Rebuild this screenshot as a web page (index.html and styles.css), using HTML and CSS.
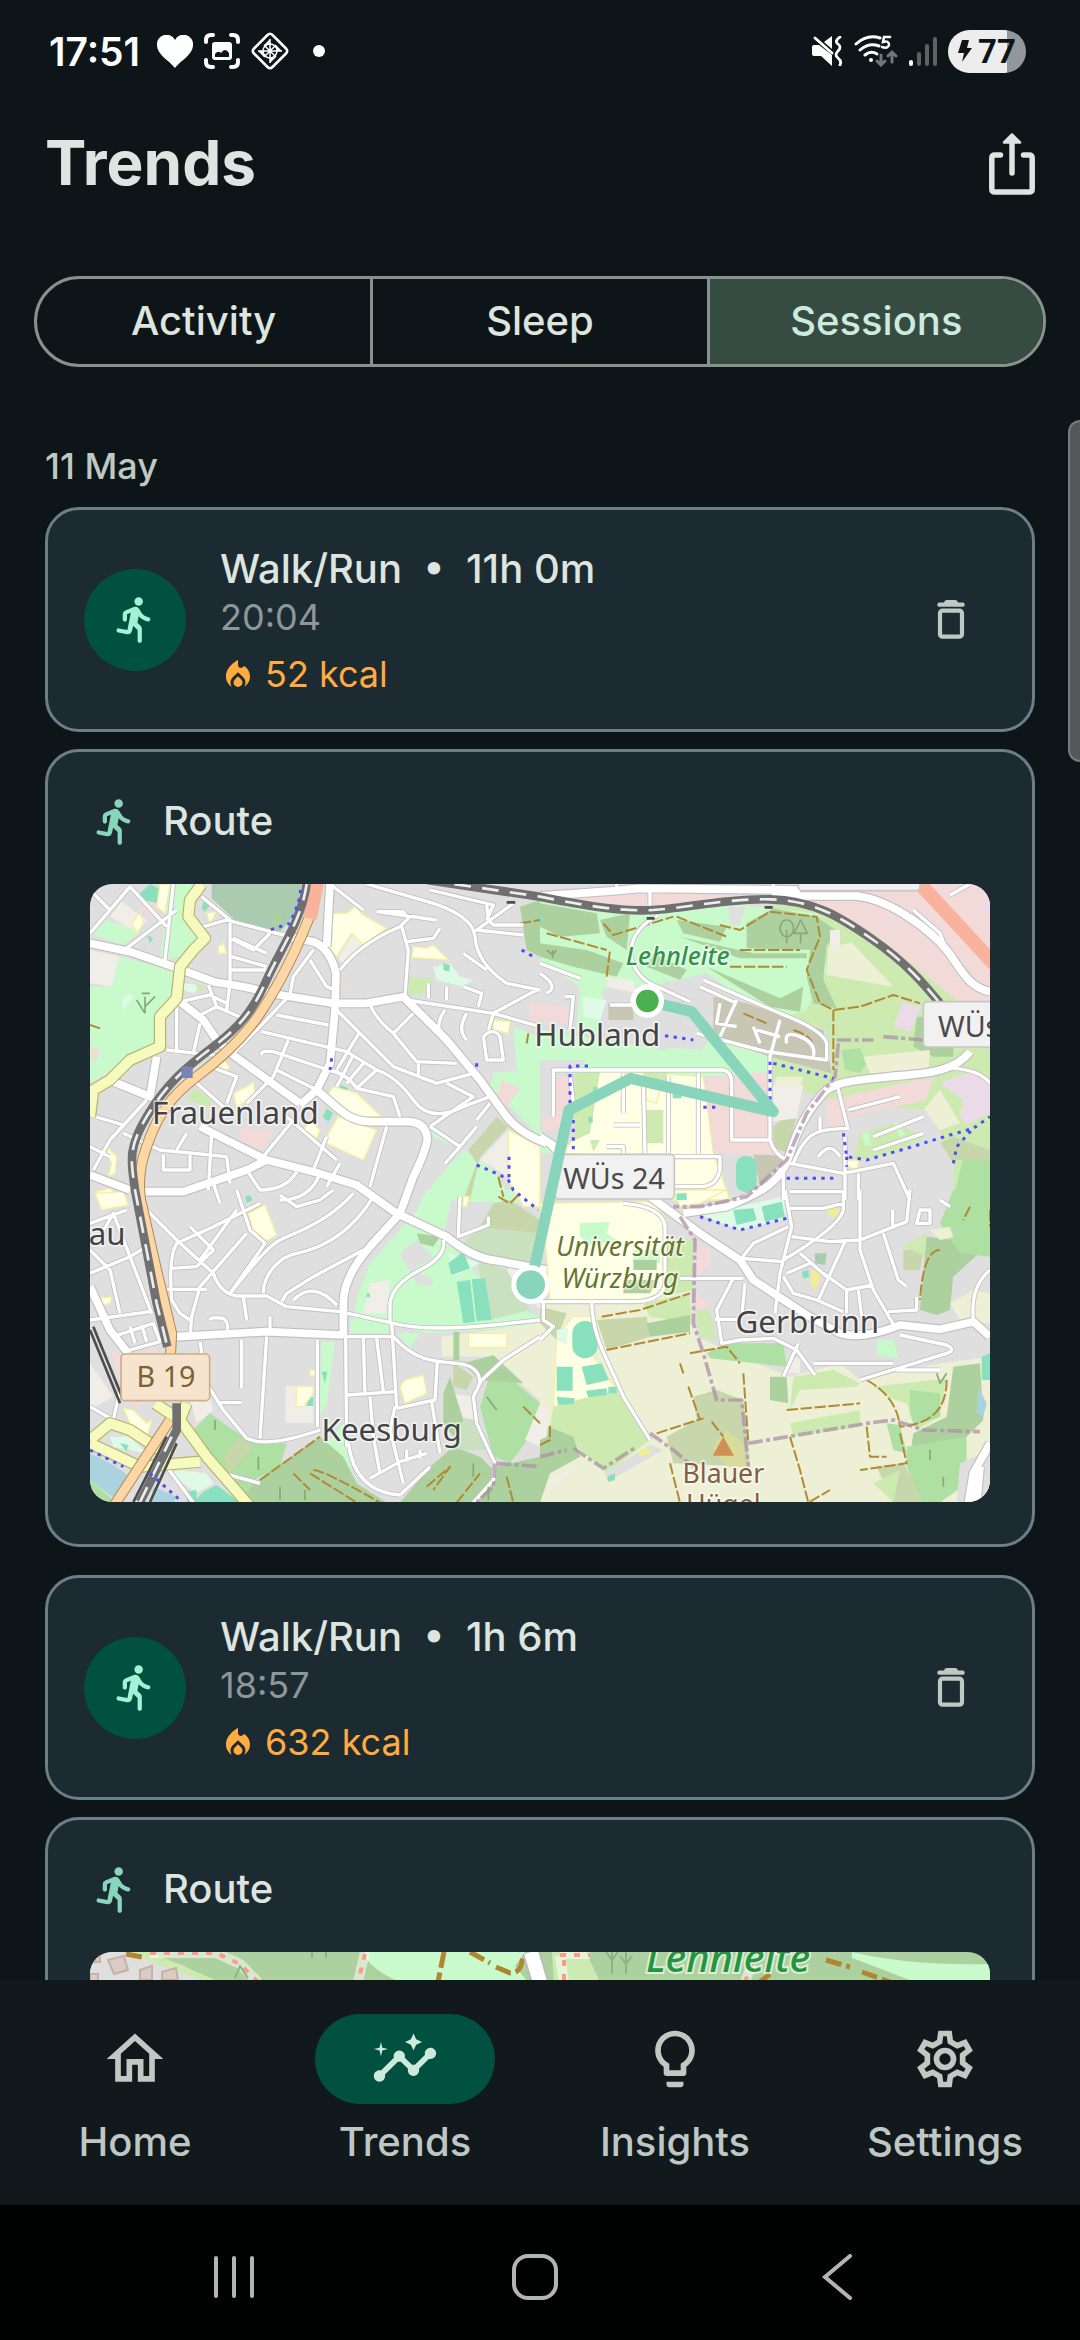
FILE: index.html
```html
<!DOCTYPE html>
<html lang="en">
<head>
<meta charset="utf-8">
<meta name="viewport" content="width=device-width, initial-scale=1">
<title>Trends</title>
<link rel="stylesheet" href="styles.css">
</head>
<body>
<svg class="defs" aria-hidden="true">
  <symbol id="i-run" viewBox="0 0 24 24"><path d="M13.49 5.48c1.1 0 2-.9 2-2s-.9-2-2-2-2 .9-2 2 .9 2 2 2zM9.89 19.38l1-4.4 2.1 2v5c0 .55.45 1 1 1s1-.45 1-1v-5.64c0-.55-.22-1.07-.62-1.45l-1.48-1.41.6-3c1.07 1.24 2.62 2.13 4.36 2.41.6.09 1.14-.39 1.14-1 0-.49-.36-.9-.85-.98-1.52-.25-2.78-1.15-3.45-2.33l-1-1.6c-.4-.6-1-1-1.7-1-.3 0-.5.1-.8.1l-3.98 1.7c-.74.31-1.22 1.04-1.22 1.84v2.36c0 .55.45 1 1 1s1-.45 1-1V9.58l1.8-.7-1.6 8.1-3.92-.8c-.54-.11-1.07.24-1.18.78-.11.54.24 1.07.78 1.18l4.11.82c1.06.21 2.1-.46 2.34-1.52z"/></symbol>
  <symbol id="i-flame" viewBox="0 0 24 24"><path d="M12 12.9l-2.13 2.09c-.56.56-.87 1.29-.87 2.07C9 18.68 10.35 20 12 20s3-1.32 3-2.94c0-.78-.31-1.52-.87-2.07L12 12.9zM16 6l-.44.55C14.38 8.02 12 7.19 12 5.3V2S4 6 4 13c0 2.92 1.56 5.47 3.89 6.86-.56-.79-.89-1.76-.89-2.8 0-1.32.52-2.56 1.47-3.5L12 10.1l3.53 3.47c.95.93 1.47 2.17 1.47 3.5 0 1.02-.31 1.96-.85 2.75 1.89-1.15 3.29-3.06 3.71-5.3.66-3.55-1.07-6.9-3.86-8.52z"/></symbol>
  <symbol id="i-trash" viewBox="0 0 30 39"><path d="M3 2.500H8Q8.500 0 10.500 0H19.500Q21.500 0 22 2.500H27A2.200 2.200 0 0 1 27 6.800H3A2.200 2.200 0 0 1 3 2.500Z"/><rect x="4" y="10.700" width="22" height="26" rx="2.500" fill="none" stroke="currentColor" stroke-width="4.200"/></symbol>
</svg>

<div class="screen">
  <div class="status">
    <div class="status-left">
      <span class="clock">17:51</span>
      <svg width="36" height="33" viewBox="0 0 36 33" fill="#fff"><path d="M18 33C13 26 0 20 0 10A9.500 9.500 0 0 1 18 5A9.500 9.500 0 0 1 36 10C36 20 23 26 18 33Z"/></svg>
      <svg width="36" height="36" viewBox="0 0 36 36" fill="none" stroke="#fff" stroke-width="4" stroke-linecap="round"><path d="M2 9V7Q2 2 7 2H9M27 2H29Q34 2 34 7V9M34 27V29Q34 34 29 34H27M9 34H7Q2 34 2 29V27"/><rect x="8" y="9" width="20" height="18" rx="3" fill="#fff" stroke="none"/><path d="M11 24V21Q14 17 17 20Q21 14 25 20V24Z" fill="#0e1518" stroke="none"/></svg>
      <svg width="38" height="38" viewBox="0 0 38 38" fill="none" stroke="#fff" stroke-width="2.500" stroke-linejoin="round"><path d="M16.500 3Q19 0.500 21.500 3L35 16.500Q37.500 19 35 21.500L21.500 35Q19 37.500 16.500 35L3 21.500Q0.500 19 3 16.500Z"/><g stroke-width="1.500"><path d="M19 7V31M7 19H31M13 13L25 25M25 13L13 25"/><circle cx="19" cy="19" r="7"/></g><path d="M19 7L13 13H19ZM31 19L25 13V19ZM19 31L25 25H19ZM7 19L13 25V19Z" fill="#fff" stroke="none"/></svg>
      <span class="dot"></span>
    </div>
    <div class="status-right">
      <svg width="31" height="30" viewBox="0 0 31 30" fill="#fff"><path d="M2 9H7L20 19V30L9 20H2Q0 20 0 18V11Q0 9 2 9Z"/><path d="M12 6L20 0V13Z"/><path d="M3 2L20 17M28 1Q22 5 26 8T26 15T26 22T28 29" fill="none" stroke="#fff" stroke-width="2.800" stroke-linecap="round"/></svg>
      <svg width="44" height="32" viewBox="0 0 44 32" fill="none" stroke="#fff" stroke-width="3" stroke-linecap="round"><path d="M2 9Q13 -1 26 3M6 15Q15 7 25 11M11 20Q17 15 23 19"/><circle cx="17" cy="25" r="2" fill="#fff" stroke="none"/><path d="M36 2H30L29 7Q35 5 35 10Q34 14 28 12" stroke-width="2.500"/><path d="M27 20V29M23 26L27 30L31 26M38 27V18M34 21L38 17L42 21" stroke="#707679"/></svg>
      <svg width="28" height="30" viewBox="0 0 28 30" stroke-width="4" stroke-linecap="round" fill="none"><path d="M2 26V28" stroke="#fff"/><path d="M10 18V28M18 10V28M26 3V28" stroke="#5d6365"/></svg>
      <div class="battery">
        <svg width="14" height="22" viewBox="0 0 14 22" fill="#0e1518"><path d="M4 0H11L9 8H14L4 22L6 13H0Z"/></svg>
        <span>77</span>
      </div>
    </div>
  </div>

  <header class="top">
    <h1>Trends</h1>
    <button class="share" aria-label="Share">
      <svg width="46" height="62" viewBox="0 0 46 62" fill="none" stroke="currentColor" stroke-width="5.500" stroke-linecap="round" stroke-linejoin="round"><path d="M11.500 22H6Q2.800 22 2.800 25V56Q2.800 59 6 59H40Q43.200 59 43.200 56V25Q43.200 22 40 22H34.500M23 10V40"/><path d="M23 1.500L31 9.500H15Z" fill="currentColor" stroke-width="2.500"/></svg>
    </button>
  </header>

  <div class="segments" role="group" aria-label="View">
    <button>Activity</button>
    <button>Sleep</button>
    <button class="on" aria-pressed="true">Sessions</button>
  </div>

  <main class="list">
    <h2 class="date">11 May</h2>

    <article class="card session">
      <span class="avatar"><svg class="run"><use href="#i-run"/></svg></span>
      <div class="info">
        <h3>Walk/Run&nbsp; •&nbsp; 11h 0m</h3>
        <p class="time">20:04</p>
        <p class="kcal"><svg class="flame"><use href="#i-flame"/></svg>52 kcal</p>
      </div>
      <button class="delete" aria-label="Delete session"><svg class="trash"><use href="#i-trash"/></svg></button>
    </article>

    <section class="card route">
      <h3><svg class="run"><use href="#i-run"/></svg>Route</h3>
      <svg class="map" viewBox="30 42 2700 1854" role="img" aria-label="Route map">
        <defs>
          <g id="majors">
            <path d="M30 220L150 245 280 290 400 335 490 350 600 375 760 400 860 400 970 380 1100 510 1200 630 1280 740Q1320 790 1400 820"/>
            <path d="M610 198L700 215Q750 235 768 310L765 420 750 580 710 660 660 705"/>
            <path d="M750 42L740 230M300 395L370 450 410 510 460 555 660 700M710 660L780 720Q820 755 870 755H980Q1040 755 1042 810 1035 850 1000 920L960 1030 870 1130Q790 1220 790 1300V1400"/>
            <path d="M360 770L560 870 700 905 830 945 950 1030 1100 1100Q1180 1165 1250 1172L1400 1200"/>
            <path d="M190 965H310L500 900 560 870M30 915L150 960M100 635L210 680 230 560M290 1400L560 1385 790 1395M30 1250L90 1380 145 1450"/>
            <g transform="translate(1380)"><path d="M0 78Q200 65 300 55L780 60M700 78H950C1060 90 1180 190 1220 240S1280 350 1350 365"/><path d="M1290 545C1240 610 1150 610 1050 620S880 635 850 670 780 750 750 850 650 970 560 1010L430 1030M0 800L60 840"/></g>
            <g transform="translate(1380 960)"><path d="M330 20L480 130 600 210 640 270 800 375 900 430Q970 450 1080 405L1200 418 1300 395 1350 440M1350 760L1300 850 1285 940M1320 830L1310 940"/></g>
          </g>
          <g id="minors">
            <path d="M30 190L150 50M30 60L90 120M150 50L260 170M280 42L255 270M140 235L290 120M365 80L450 150V340L440 420M370 170L440 150 740 230M450 205L520 240 570 190M455 260L560 290M460 205L560 250M455 300H560M850 120L750 42M890 125H970L985 145 960 170Q840 220 780 300M965 170L985 240 975 380M890 125L1070 150M980 215L1060 205 1080 175M860 42L1060 100Q1180 140 1185 200 1190 280 1280 340L1380 360M1050 60L1240 105 1220 150M1300 100L1190 180 1330 195M1150 250L1220 300M1240 430L1370 360M1220 105L1225 150 1240 165H1330M700 240L640 320 630 375M690 270L740 350 765 360M300 395L390 375 440 400M385 345L410 410 350 440M290 410V550M360 460L340 550M260 540L440 560M410 410L500 450"/>
            <path d="M620 385L540 470 460 550M590 435L745 465M545 485L800 545M625 510L580 620 500 700M545 555Q540 540 580 545L745 600M590 600L700 655M770 420L940 590 1070 640 1180 610M870 400Q880 440 940 490L1010 575 1130 580M940 490L1000 430M840 485L770 600M1015 575V620M745 600Q800 610 830 655L940 680 960 740M830 655L890 600Q950 620 1000 690T1150 710L1230 680M800 545L890 600M820 555L770 650M850 580L800 640M1050 770L1180 680 1100 640M1190 750L1230 700M1050 770L1140 830 1190 770M1140 830L1095 880M980 390L1240 430 1380 470M1240 430L1225 480M1045 340V385M1100 350V390M1150 350L1205 370 1195 410M1095 420Q1060 470 1090 500M1160 430Q1130 480 1160 510M1210 500L1220 570H1270L1260 500Q1240 470 1210 500"/>
            <path d="M340 630L430 710M390 590L470 620 440 700M30 735L130 765 100 800M200 690L90 810 40 900M130 790L240 840 440 860M320 790L290 840M395 790L385 960M250 855V900H330V855M440 860L450 940M640 750L550 860M740 800L700 900M620 740L770 870M920 770L870 950M780 880L740 950M650 905Q620 960 540 960L500 900M720 910Q690 990 600 990M400 940L420 1000M30 830L90 860"/>
            <g transform="translate(0 960)"><path d="M200 60L290 150 400 250Q420 310 470 318H560L620 350 780 365 940 400Q1040 425 1240 405L1380 390M470 0L510 120 555 160 450 310M820 10C740 100 640 130 600 150S500 250 450 310M880 20C800 150 700 180 650 190S550 250 550 310M850 180L700 260 620 310 605 335M640 330Q700 270 770 345M540 40L400 110 290 160Q265 200 275 330L300 370 330 390M470 60L360 210M500 130L360 290 335 380 330 440M275 235L350 230 400 180 330 110M250 298H380M490 320L500 390M600 15L650 50 720 30 760 0"/><path d="M360 455L380 580 430 660 500 745Q560 775 720 720M485 450V595M560 440L540 745M410 638H485M712 450V710M797 440L800 770M890 445L910 605M850 445L855 615M935 400L950 650M800 615L950 605M870 620L880 740 900 850M805 760C820 870 880 910 960 915M945 650L930 720 970 880M950 655L1065 630 1072 515M790 440H940C1000 510 1060 515 1130 520S1200 570 1200 580L1180 620 1190 700 1245 820 1240 870 1180 938M1200 575L1270 510 1380 440M870 865L960 815 1040 790M1055 635L1080 790M980 780V815M1020 780V805M960 915L1050 830M1090 150Q1100 200 1020 240T930 340V400M1140 20L1135 140 1225 105V80M60 140L100 70 150 200 215 370M30 180L90 240 120 370M30 250L150 200 200 170M30 390L210 365M100 440L220 400 240 455 150 480M150 410L165 460M185 405L200 455M30 100L140 60M430 850L540 880M260 830L340 938M390 390Q390 380 430 385Q450 400 440 430M570 430V380M30 650L100 690 120 600"/></g>
            <g transform="translate(1380)"><path d="M355 135C250 190 250 290 330 340L450 395M0 280L120 325M0 310Q60 350 20 370M75 380H100L90 480M210 405H430M40 740V600H550Q575 605 575 640V810H690V555M90 610L100 700M250 610V730M310 620L315 850M385 620V850M475 610V850M220 765H300M0 800L60 860H540V900Q530 950 480 950H400M200 830H250V860M690 810Q700 850 740 870M470 490L680 545 860 570V520Q850 480 720 430L490 330M590 390L540 500M720 450L690 560M640 470L660 520M540 400L530 460 590 470M650 480L720 500M740 520Q730 480 780 500T820 560M890 640L925 780M925 720L1080 680M750 880L910 910 1060 880 1110 990M760 880C800 780 830 780 925 775M730 900V990M915 800V990M955 910V990M750 965H910M840 740V780M1350 640Q1320 600 1240 595M1120 120L1200 190 1220 240M1230 75L1290 42M480 350L590 400M330 60V110M230 42V70M700 42V80M835 860Q870 810 900 860M1000 800L1150 740M1000 840L1150 790"/></g>
            <g transform="translate(1380 960)"><path d="M0 335H290Q370 330 375 280V110Q370 50 250 40M155 340C160 450 200 500 250 620L330 750M10 335V390L40 410 0 450M420 265H610M580 265L530 360 545 460 600 450 700 445 770 480 825 555M730 560L775 460M615 280L605 380M525 388H600M745 110L640 160 605 205 730 215M735 0L755 110 720 250 705 370M740 55H850L910 40M755 140L870 155 960 150 1100 95 1110 0M910 0V60Q900 110 730 210M960 0V180L1000 300 1070 420M1030 130L1075 270 1100 290M1058 60V110M915 155L835 330M730 260L760 310 830 330 910 365M850 250L920 300 1000 285M780 190L860 260M920 300V370M955 300L965 380M740 250L810 220M1045 365L1130 360V320M1080 435L1220 465Q1250 480 1220 490L960 570M820 520H1060M1070 540H1200M1350 240Q1290 290 1300 390M1140 60H1170V100H1130ZM1200 30L1230 50"/></g>
          </g>
        </defs>
        <rect class="residential" width="2760" height="1950"/>

        <g>
          <path class="plain" d="M90 140L125 95 200 150 170 190ZM30 240L120 260 95 350 30 340ZM775 260L820 190 850 220 790 290ZM1200 870L1285 780V920Z"/>
          <path class="park" d="M30 350H95L120 260 280 300 270 390 235 430 230 530 130 580 30 640ZM270 42H350L310 130 380 200 300 260 240 270ZM80 150L30 190 130 225 180 185ZM1300 470L1380 500V800L1230 650 1240 610 1310 600ZM1040 990L1060 940 1150 840 1200 870 1250 910 1300 1000ZM1050 780L1130 830 1060 800ZM540 440L560 430 520 480 490 500Z"/>
          <path class="light" d="M1060 290L1110 280 1140 320 1180 330 1150 350 1070 330ZM310 340L360 345 340 370 310 360ZM125 390L150 370 160 380 130 420Z"/>
          <path class="grave" d="M395 42H665L650 130 600 185 470 155 395 85Z"/>
          <path class="forest" d="M1320 110L1380 90V260L1340 240ZM575 130L600 125 610 165 575 170Z"/>
          <path class="grass" d="M985 320L1060 325 1050 370 985 375ZM340 655L400 690 385 710 320 690ZM345 340L375 350 360 370Z"/>
          <path class="heath" d="M1250 740L1285 770 1200 860 1170 990H1150L1190 880 1165 840Z"/>
          <path class="pink" d="M180 100L215 90 235 120 195 135ZM480 775L585 780 545 840 475 810ZM1350 400H1380V455H1350ZM1265 630L1320 655 1280 710 1250 690ZM785 345L805 350 795 370ZM30 520L60 550 40 580Z"/>
          <path class="sport" d="M175 75L210 42 245 60 235 100 190 90ZM200 195L220 205 210 220ZM370 95L390 105 375 125 365 115ZM1090 280L1110 285 1108 305 1090 300ZM740 715L760 730 745 755 728 740ZM785 645L805 655 795 670 775 660ZM835 710L855 715 840 735ZM500 660L520 665 510 685Z"/>
          <path class="school" d="M750 130H800L825 110 850 135 920 175 850 225 815 190 770 260 745 230ZM1000 230L1040 235 1060 225 1105 270 995 262ZM745 790L775 740 890 780 850 870 740 820ZM760 650L830 670 905 740 830 740 740 680ZM240 42H270L255 130 230 110ZM155 160L180 130 190 160 170 190ZM415 230L430 220 440 250 415 250ZM85 835L110 860 105 910 85 920 95 880 80 850ZM460 670L500 650 520 635 525 680 470 710ZM50 965L90 955 120 990 60 1000ZM1240 450L1290 455 1285 490 1240 480ZM690 750L720 780 710 805 670 780ZM430 570L450 590 440 600 410 590ZM380 130L410 125 390 160ZM1285 780L1380 830V1010H1330L1285 930Z"/>
        </g>
        <g transform="translate(0 960)">
          <path class="park" d="M1040 0H1120L1090 140 1260 330 1380 380V410L1040 430 940 400 820 390 830 320 870 220 960 120 1010 60ZM725 455H765L740 650 718 670ZM740 760L790 700 830 938 740 880ZM950 430H1020L990 475ZM810 390H930L925 430H810ZM1240 0H1300L1320 40 1270 30Z"/>
          <path class="residential" d="M960 190L1010 150 1060 200 1000 240 1060 270 1050 290 1010 280Z"/>
          <path class="plain" d="M870 280L930 270 920 370 850 370ZM617 587H700V698H617ZM1290 230L1350 240 1380 300V360L1330 300 1270 260ZM330 630L390 620 400 660 350 700ZM30 520L100 620 30 660ZM1110 610L1180 620 1190 740 1140 700Z"/>
          <path class="allot" d="M1150 160L1200 110 1380 110V220L1200 210ZM1190 210L1280 240 1350 360 1230 390ZM1120 680L1190 690 1220 780 1120 780Z"/>
          <path class="heath" d="M1200 110L1240 40 1290 30 1380 90V130ZM1120 520L1180 560 1160 600 1120 590Z"/>
          <path class="farm" d="M1085 440L1380 400V630L1240 510 1200 500 1085 500Z"/>
          <path class="wood" d="M330 730L390 670 430 700 520 760 620 760 600 830 520 870 500 938 420 870ZM1240 520L1380 640V700L1290 820 1240 800 1200 650ZM30 870L110 938H30Z"/>
          <path class="forest" d="M520 880L720 740 790 800 830 880 920 938H480ZM1090 610L1110 560 1150 690 1120 740 1090 700ZM1050 830L1120 770 1200 800 1250 850 1240 938H960ZM1150 520L1240 495 1330 580 1200 570ZM1250 830L1380 800V938H1240ZM1120 425H1138V510H1120ZM1010 130L1080 140 1060 170 1020 160Z"/>
          <path class="plain" d="M1380 640L1335 750 1380 770Z"/>
          <path class="heath" d="M430 800L480 740 520 770 450 850Z"/>
          <path class="pink" d="M85 465L120 500V570ZM270 350L290 400V430L265 380ZM200 475H230V490H200ZM140 625H200L170 660Z"/>
          <path class="water" d="M30 790L100 825 150 860 110 930 30 870ZM220 890L290 920 280 938H210Z"/>
          <path class="light" d="M300 840L380 850 400 880 350 910 270 850ZM90 740L150 740 200 790 100 770ZM1105 190L1200 220 1120 260Z"/>
          <path class="sport" d="M1105 220L1150 185 1170 235 1115 255ZM1130 275L1170 270 1185 395 1150 400ZM1175 268L1215 265 1235 390 1190 393ZM370 905L410 885 480 938H340ZM680 620H700V648H680ZM1010 560H1028V580H1010ZM495 20L510 15 518 30 500 40ZM725 545H742L735 580ZM120 760L145 765 140 785ZM320 905L350 900 350 938H320ZM860 310H870V322H860Z"/>
          <path class="school" d="M1165 430H1280V472H1165ZM505 70L555 45 590 135 560 152 520 120ZM45 10L130 5 145 45 65 60ZM650 590H700V610L670 650H648ZM690 540H705V558H690ZM975 570L1030 555 1040 610 975 640 960 590ZM65 322H95L90 340 65 345ZM130 655L160 660 200 700 215 690 200 750 150 700ZM1150 20H1168L1160 50H1148Z"/>
        </g>
        <g transform="translate(1380)">
          <path class="pink" d="M230 42H1350V420L1240 400 1000 200 800 100 400 110 0 90ZM10 620H100V780H10Z"/>
          <path class="grass" d="M700 60L1000 190 1350 470V990H1240L1200 780 1160 720 880 700 690 620 700 560 880 600 860 480 700 420Z"/>
          <path class="park" d="M0 90L250 130 400 125 600 105 830 130 860 300 800 420 740 440 600 380 500 310 370 340 190 360 180 490 0 480ZM0 480L370 540 480 500 690 560 680 620 0 610ZM0 780L60 850H0Z"/>
          <path class="residential" d="M0 285L60 310 120 350 110 480 0 480Z"/>
          <path class="pink" d="M0 400L85 410V465L0 445Z"/>
          <path class="forest" d="M0 100L170 130 180 190 60 200 0 170ZM0 220L140 240 250 280 230 320 100 290 0 260ZM180 150L270 130 260 240 200 200ZM410 150L560 170 540 215 430 190ZM620 160L700 115 830 140 820 240 620 235ZM340 250L440 300 420 330 320 290ZM500 290L720 385 790 350 780 425 690 410ZM830 140L900 190 860 225 850 330 890 415 820 400 800 320 810 240ZM420 200L640 250H800V265H600ZM1130 440H1240V560L1180 560 1120 530Z"/>
          <path class="wood" d="M905 540L960 535 980 580 960 608 915 600ZM1270 860L1350 850V990H1240Z"/>
          <path class="farm" d="M865 230L935 218 1060 350 860 315ZM970 560L1170 540 1165 600 990 610ZM710 620L790 620 780 650 700 660ZM1150 720L1200 660 1260 760 1200 780Z"/>
          <path class="heath" d="M700 770L780 700 740 850 700 830ZM1110 860L1240 800 1350 840V870H1200Z"/>
          <path class="residential" d="M195 350L470 390 515 410 520 500 480 540 360 530 340 490H190ZM370 325L460 370 510 400 450 420ZM0 570L140 570 100 610H40V740H0ZM565 110H615L600 165H570ZM740 860L800 790 900 775 1160 720 1190 800 1240 880V990H700Z"/>
          <path class="plain" d="M690 650L790 645 770 745 690 755ZM200 320L280 330 290 370 200 350ZM870 180L900 180 900 230H870Z"/>
          <path class="brown" d="M520 380L620 400 850 480 875 610 690 560 520 500ZM205 400H280V450H205ZM640 850L740 860 660 950Z"/>
          <path class="school" d="M180 600L490 620 520 850 570 990H400V860L60 850 100 810Z"/>
          <path class="grass" d="M105 610L180 605 150 790 105 810ZM315 720H370V820H315ZM150 810H180L160 845ZM310 600H380V640H310ZM960 790L1060 760 1160 800 1060 850 940 870Z"/>
          <path class="pink" d="M490 620L680 605 690 810 700 855 525 850ZM860 690L1180 620 1160 690 930 740 910 780 860 760Z"/>
          <path class="lilac" d="M1060 470L1090 395 1145 410 1110 485ZM1200 640L1300 600 1350 640V730L1280 765 1260 740 1270 690ZM1320 110L1350 90V130Z"/>
          <path class="park" d="M965 790L985 785 995 825 975 830ZM1060 760L1075 755 1095 795 1080 800Z"/>
          <path class="light" d="M130 380L200 390 180 450 130 440Z"/>
          <rect class="sport" x="588" y="858" width="62" height="108" rx="28"/>
          <path class="sport" d="M0 135L15 140 10 155H0ZM410 968H440V990H410ZM398 660H425V685H398ZM160 650H172V675H160ZM145 740H158V758H145Z"/>
          <path class="school" d="M922 870L958 872 950 898 922 890ZM318 650L360 655 350 700 320 690Z"/>
        </g>
        <g transform="translate(1380 960)">
          <path class="farm" d="M0 340L450 300 470 440 600 500 750 560 900 520 960 570 1200 520 1350 500V938H0Z"/>
          <path class="school" d="M0 40L340 35 380 90 375 310 340 330H30L20 200ZM50 440L100 380 170 380 160 500 230 600 40 650ZM400 0H560L480 40 420 50Z"/>
          <path class="heath" d="M170 390L320 380 330 440 200 480ZM0 350L80 370 50 450 0 400ZM380 740L470 690 460 620 530 600 610 630 630 830 400 820ZM1010 830L1090 820 1160 938H1060ZM1090 180H1150L1140 240H1090Z"/>
          <path class="park" d="M120 100L210 95 200 130 230 150 160 170 120 140ZM280 180H360V220L280 215ZM1010 450L1060 450 1075 505 1010 495Z"/>
          <path class="light" d="M480 75L730 20 740 85 600 120ZM50 420L85 415 80 465 50 450Z"/>
          <path class="grass" d="M370 150L460 150V300L370 320ZM310 340L450 310 455 400 330 380ZM470 360L510 360 530 450 480 440ZM40 650L230 600 330 750 200 850 110 770 30 710ZM760 560L880 540 960 580 950 590 780 600 750 660ZM750 700L960 660V710L760 740ZM1000 590L1220 565 1200 680 1130 720 1080 640ZM1090 170L1160 130V200ZM1000 880L1080 840 1060 938Z"/>
          <path class="forest" d="M320 400L450 375V425L330 440ZM0 700L100 740 120 800 30 850 0 938ZM690 560L740 560 745 640 690 630ZM1160 140L1250 150 1230 360 1190 375 1140 360ZM1240 530L1320 520 1330 690 1250 770 1110 800 1120 730 1220 680ZM1240 150L1350 100V160L1240 260ZM280 210H350V240H280ZM250 270H350L330 310H250Z"/>
          <path class="wood" d="M500 490L560 460 730 460 740 530 510 505ZM1240 0H1350V200L1260 190 1200 100ZM1110 600L1200 610V680L1110 710ZM1100 770L1280 740V880L1200 938H1150L1100 830ZM1040 700L1080 705 1100 790 1060 780Z"/>
          <path class="farm" d="M960 600L1100 640 1120 700 980 690ZM1230 340L1300 300 1350 310V400L1260 390ZM1170 120L1230 110 1240 140 1200 150Z"/>
          <path class="plain" d="M0 650L30 660 20 740 0 750ZM40 860L120 820 50 880 20 920ZM750 510L780 500V550H740Z"/>
          <path class="hill" d="M520 770L560 720 610 760 620 830H560Z"/>
          <path class="pink" d="M470 170L510 170V220L470 260ZM465 300L510 350 470 362Z"/>
          <path class="residential" d="M190 850L330 765 370 780 210 870ZM1260 820L1350 780V938H1250Z"/>
          <path class="grave" d="M825 190L860 190 855 225 825 220Z"/>
          <path class="sport" d="M580 60L640 55 650 90 590 105ZM665 50L725 35 735 80 675 95ZM50 530H98V602H50ZM125 530L185 520 207 570 140 585ZM138 602L200 595V615L145 622ZM50 620L105 625 100 642 55 645ZM785 245L805 240 808 262 790 265ZM410 10H440V30H410ZM200 860L225 850V870L205 875ZM1325 500L1350 490V570H1325ZM205 590H230V610H205Z"/>
          <rect class="sport" x="97" y="393" width="76" height="112" rx="38"/>
          <path class="water" d="M1315 590L1340 640 1330 680 1310 670Z"/>
          <path class="gold" d="M815 240H838V270L825 300 812 280ZM855 60L880 50 900 60 880 85ZM290 790L320 770 335 785 310 800Z"/>
        </g>

        <g class="tracks">
          <g transform="translate(1380)"><path d="M190 160L220 195 400 140M200 320L210 240M540 165L600 180 690 125 830 140 840 200 800 300 840 400 880 420 960 410 1060 375 1140 400M880 420V600M570 290H740M600 240H780M20 190L200 240M410 140L560 200M610 430L680 460M760 480Q830 500 820 550"/></g>
          <g transform="translate(1380 960)"><path d="M185 380L300 360 450 310M200 480L450 430M450 490L560 470 600 520M610 550L625 760M350 730L490 685M390 820L420 938M750 740L780 840 805 938 870 900M740 660L960 640M980 570Q1070 620 1080 710M1220 570Q1220 700 1080 710M1080 730L1100 820 960 840M420 520L430 550M445 590L480 690M515 695L550 740M980 710L990 800H1040M1200 180Q1150 180 1140 330M0 765L30 750V700M1290 50L1270 90M1350 60V110"/></g>
          <g transform="translate(0 960)"><path d="M540 870L720 740M690 850L830 938M700 840Q730 840 900 938M640 850L690 900M1040 890L1110 830 1060 900M1130 938L1200 850M1280 860L1300 938M1330 650L1380 700M1255 20L1290 40 1320 10"/></g>
          <path d="M30 465L60 475M1345 490L1340 520M1320 160L1380 150M1255 920L1270 980"/>
        </g>

        <g class="casing minor"><use href="#minors"/></g>
        <g class="casing major"><use href="#majors"/></g>
        <g class="paved minor"><use href="#minors"/></g>
        <g class="paved major"><use href="#majors"/></g>

        <g class="yellow-road">
          <path id="sec" d="M365 42L330 90 325 140 375 205 340 240 300 290 290 385 240 440V530L150 570 90 630 40 660 30 740M30 1710L90 1660 150 1680 270 1760M225 1600L300 1650 320 1600M300 1650L380 1760 510 1910M30 1720L180 1790 360 1775"/>
          <use href="#sec" class="inner"/>
        </g>
        <g class="trunk">
          <path id="tr" d="M700 110C640 270 580 370 540 430S430 560 350 620 230 740 200 830Q170 910 182 990L225 1180 275 1390 270 1480M270 1650L100 1910"/>
          <use href="#tr" class="inner"/>
          <path class="red" d="M712 30L690 145M2500 20L2750 290"/>
        </g>
        <g class="rail">
          <path d="M680 42C665 150 600 240 560 330S480 470 400 530 260 640 200 740 155 880 165 960L190 1090 230 1300 262 1430M290 1600V1680L180 1896M1040 30L1380 80C1530 110 1630 125 1720 120S1940 85 2070 88 2280 140 2380 210 2530 340 2580 400"/>
          <path class="ties" d="M680 42C665 150 600 240 560 330S480 470 400 530 260 640 200 740 155 880 165 960L190 1090 230 1300 262 1430M275 1700L180 1896M1040 30L1380 80C1530 110 1630 125 1720 120S1940 85 2070 88 2280 140 2380 210 2530 340 2580 400"/>
          <path class="siding" d="M30 1380L120 1600M40 1370L130 1590M160 1896L260 1700M210 1896L290 1720M1280 97H1306M1700 145H1724M2054 112H2078"/>
        </g>

        <g class="boundary">
          <path d="M2270 510H2380M2410 500L2530 510M2275 520L2265 620 2180 730 2120 870 2000 980 1860 1010 1780 1010"/>
          <path d="M1800 1040L1845 1110 1840 1360 1870 1450 1910 1590H1985L2005 1790M2005 1720L2360 1660 2440 1650 2530 1680 2700 1685M1710 1690L1780 1740 1840 1790M1380 1760L1460 1740M1480 1735L1570 1795 1670 1730M1250 1780L1380 1790M1245 1780L1240 1850 1190 1896"/>
        </g>
        <g class="dotted">
          <path d="M662 60L655 100 630 160 570 180M755 565L750 600M1190 580V600M1325 240L1360 260M1190 885L1260 915 1285 930 1300 960 1375 1020M1287 860V930M30 1740L130 1790M210 1810L300 1890"/>
          <path d="M1470 700V588H1530M1755 497L1840 510M2070 575V700M2080 580L2260 625M1870 712H1920M2290 790L2300 860 2360 870 2480 835 2610 795 2680 775 2730 740M2620 880L2630 830 2680 775M2120 925H2270M2300 860V890M1480 750V840M1860 1040L1980 1080 2120 1045"/>
        </g>
        <rect x="304" y="590" width="34" height="34" fill="#7884b5"/>
        <path class="trees" d="M2120 150a20 25 0 1 0 1 0M2120 180V220M2162 150L2142 190H2182ZM2162 190V220M170 390L195 430M225 380L195 410M195 380V430M185 370H210M1400 240L1418 255 1430 240M1418 240V265M600 1850V1890M535 1760V1800M405 1650V1680M675 1860V1890M1180 1780V1820M1225 1850V1890M2550 1740V1770M2590 1820V1850M1220 1580L1250 1620M2570 1510L2580 1540 2600 1510"/>
        <path d="M1930 1700L1962 1757H1898Z" fill="#d08f55"/>

        <g class="shields">
          <rect x="2155" y="0" width="365" height="62" rx="12"/>
          <rect x="2530" y="395" width="360" height="136" rx="12"/>
          <rect x="1425" y="853" width="358" height="134" rx="12"/>
          <rect class="federal" x="123" y="1452" width="266" height="140" rx="12"/>
          <text x="1602" y="957" text-anchor="middle">WÜs 24</text>
          <text x="2574" y="500">WÜs 24</text>
          <text class="federal-text" x="258" y="1552" text-anchor="middle">B 19</text>
        </g>
        <g class="places">
          <text x="466" y="763" text-anchor="middle">Frauenland</text>
          <text x="1552" y="528" text-anchor="middle">Hubland</text>
          <text x="2182" y="1390" text-anchor="middle">Gerbrunn</text>
          <text x="935" y="1712" text-anchor="middle">Keesburg</text>
          <text x="137" y="1125" text-anchor="end">Sanderau</text>
          <text class="wood-name" x="1793" y="286" text-anchor="middle">Lehnleite</text>
          <text class="uni" x="1620" y="1159" text-anchor="middle">Universität</text>
          <text class="uni" x="1620" y="1255" text-anchor="middle">Würzburg</text>
          <text class="peak" x="1930" y="1840" text-anchor="middle">Blauer</text>
          <text class="peak" x="1930" y="1933" text-anchor="middle">Hügel</text>
        </g>
        <path class="track" d="M1702 393L1835 425 2080 725 1652 625 1467 720 1352 1244"/>
        <circle cx="1702" cy="393" r="50" fill="#fff"/><circle cx="1702" cy="393" r="34" fill="#4caf50"/>
        <circle cx="1352" cy="1244" r="58" fill="#fff"/><circle cx="1352" cy="1244" r="43" fill="#88d5bb"/>
      </svg>
    </section>

    <article class="card session">
      <span class="avatar"><svg class="run"><use href="#i-run"/></svg></span>
      <div class="info">
        <h3>Walk/Run&nbsp; •&nbsp; 1h 6m</h3>
        <p class="time">18:57</p>
        <p class="kcal"><svg class="flame"><use href="#i-flame"/></svg>632 kcal</p>
      </div>
      <button class="delete" aria-label="Delete session"><svg class="trash"><use href="#i-trash"/></svg></button>
    </article>

    <section class="card route">
      <h3><svg class="run"><use href="#i-run"/></svg>Route</h3>
      <svg class="map" viewBox="0 0 900 618" role="img" aria-label="Route map">
        <rect class="forest" width="900" height="618"/>
        <path class="residential" d="M0 0H35L90 12 125 30H0Z"/>
        <path class="park" d="M275 0H435L425 14 438 30H310Q285 20 275 5ZM762 0Q820 14 900 12V40H850Q800 20 762 6Z"/>
        <path class="grass" d="M462 0H496L510 30H464ZM35 0H60L130 30H115Z"/>
        <path d="M18 8L34 4 38 18 24 22ZM50 18L62 14 62 28H50ZM72 20L86 16 88 28H72ZM0 22H8V30H0ZM2 4H10V10H2Z" fill="#d8ccc4" stroke="#c7b1a3" stroke-width="2"/>
        <g fill="none" stroke-width="4">
          <path d="M60 1H126L150 12 168 30M275 0L268 30M470 2H500M470 4L474 30M655 30L662 12" stroke="#fff" stroke-opacity=".5" stroke-width="10"/>
          <path d="M60 1H126L150 12 168 30M275 2L268 30M470 3H500M474 8V30M655 30L662 12" stroke="#f98" stroke-dasharray="6 8"/>
          <path d="M36 2L52 5M354 0L348 30M380 0L400 11M406 15L420 21Q432 22 433 2M670 30L680 22M736 8L760 15M772 20L800 30" stroke="#b0862f" stroke-width="5" stroke-dasharray="16 5"/>
          <path d="M441 0L450 30" stroke="#bbb" stroke-width="18"/><path d="M441 0L450 30" stroke="#fff" stroke-width="14"/>
        </g>
        <path d="M222 0V6M236 0V6M516 0L522 8 528 0M522 0V22M536 0V22M530 4L536 12 542 4M145 26L150 14 158 26" fill="none" stroke="#8fb283" stroke-width="2"/>
        <text class="big-wood" x="638" y="20" text-anchor="middle">Lehnleite</text>
      </svg>
    </section>
    <div class="scrollbar"></div>
  </main>

  <nav class="tabs" aria-label="Main">
    <a href="#home"><span class="pill"><svg viewBox="0 0 24 24"><path d="M12 5.690l5 4.500V18h-2v-6H9v6H7v-7.810l5-4.500M12 3L2 12h3v8h6v-6h2v6h6v-8h3L12 3z"/></svg></span>Home</a>
    <a href="#trends" class="active" aria-current="page"><span class="pill"><svg viewBox="0 0 24 24"><path d="M21 8c-1.450 0-2.260 1.440-1.930 2.510l-3.550 3.560c-.3-.09-.74-.09-1.040 0l-2.550-2.550C12.270 10.450 11.460 9 10 9c-1.450 0-2.270 1.440-1.930 2.520l-4.560 4.550C2.440 15.740 1 16.550 1 18c0 1.100.9 2 2 2 1.450 0 2.260-1.440 1.930-2.510l4.550-4.560c.3.09.74.09 1.040 0l2.550 2.550C12.730 16.550 13.540 18 15 18c1.450 0 2.270-1.440 1.930-2.520l3.560-3.550C21.560 12.260 23 11.450 23 10c0-1.100-.9-2-2-2zM15 9l.94-2.070L18 6l-2.060-.93L15 3l-.92 2.070L12 6l2.080.93zM3.500 11L4 9l2-.5L4 8l-.5-2L3 8l-2 .5L3 9z"/></svg></span>Trends</a>
    <a href="#insights"><span class="pill"><svg viewBox="0 0 24 24"><path d="M9 21c0 .5.4 1 1 1h4c.6 0 1-.5 1-1v-1H9v1zm3-19C8.100 2 5 5.100 5 9c0 2.400 1.200 4.500 3 5.700V17c0 .5.4 1 1 1h6c.6 0 1-.5 1-1v-2.300c1.800-1.300 3-3.400 3-5.700 0-3.900-3.100-7-7-7zm2.900 11.100l-.9.6V16h-4v-2.300l-.9-.6C7.800 12.200 7 10.600 7 9c0-2.800 2.200-5 5-5s5 2.200 5 5c0 1.600-.8 3.200-2.100 4.100z"/></svg></span>Insights</a>
    <a href="#settings"><span class="pill"><svg viewBox="-12 -12 24 24" class="gear"><path d="M-1.900-6.100L-1.500-9H1.500L1.900-6.100 4.330-4.700 7.040-5.800 8.540-3.200 6.230-1.400V1.400L8.540 3.200 7.040 5.800 4.330 4.700 1.900 6.100 1.500 9H-1.500L-1.900 6.100-4.330 4.700-7.040 5.800-8.540 3.200-6.230 1.400V-1.400L-8.540-3.200-7.040-5.800-4.330-4.700Z"/><circle r="3"/></svg></span>Settings</a>
  </nav>

  <div class="sysnav">
    <button aria-label="Recent apps"><svg width="46" height="46" viewBox="0 0 46 46"><path d="M5 4V42M23 4V42M41 4V42"/></svg></button>
    <button aria-label="Home screen"><svg width="46" height="46" viewBox="0 0 46 46"><rect x="2" y="2" width="42" height="42" rx="14"/></svg></button>
    <button aria-label="Back"><svg width="46" height="46" viewBox="0 0 46 46"><path d="M36 2L11 23L36 44"/></svg></button>
  </div>
</div>
</body>
</html>
```

FILE: styles.css
```css
* { box-sizing: border-box; }

body {
  margin: 0;
  background: #0e1518;
  color: #dee4df;
  font-family: Inter, "Liberation Sans", sans-serif;
}

h1, h2, h3, p { margin: 0; font-weight: 500; }
svg { display: block; flex: none; }

button {
  padding: 0;
  border: 0;
  background: none;
  color: inherit;
  font: inherit;
}

.defs { display: none; }

.screen {
  display: flex;
  flex-direction: column;
  height: 100vh;
}

/* Status bar */
.status {
  display: flex;
  justify-content: space-between;
  align-items: center;
  height: 102px;
  padding: 0 54px 0 49px;
  color: #fff;
}

.status-left, .status-right { display: flex; align-items: center; gap: 11px; }

.clock {
  margin-right: 6px;
  font-size: 39px;
  font-weight: 600;
}

.dot {
  width: 12px;
  height: 12px;
  margin-left: 13px;
  border-radius: 50%;
  background: #fff;
}

.battery {
  display: flex;
  justify-content: center;
  align-items: center;
  gap: 6px;
  width: 78px;
  height: 43px;
  border-radius: 22px;
  background: linear-gradient(90deg, #ededed 76%, #939799 76%);
  color: #0e1518;
  font-family: Roboto, Inter, sans-serif;
  font-size: 33px;
  font-weight: 700;
}

/* Page header */
.top {
  display: flex;
  justify-content: space-between;
  align-items: center;
  height: 123px;
  padding: 0 45px;
}

.top h1 { font-size: 62px; font-weight: 700; line-height: 76px; margin-bottom: 2px; }

.segments {
  display: flex;
  height: 91px;
  margin: 51px 34px 0;
  border: 3px solid #87928c;
  border-radius: 46px;
  overflow: hidden;
}

.segments button {
  flex: 1;
  padding-bottom: 2px;
  font-size: 40px;
  font-weight: 500;
}

.segments button + button { border-left: 3px solid #87928c; }
.segments .on { background: #364b42; color: #cdeadd; }

/* Session list */
.list {
  position: relative;
  flex: 1;
  min-height: 0;
  padding: 77px 45px 0;
  overflow: hidden;
}

.date {
  margin-bottom: 18px;
  color: #bfc9c2;
  font-size: 36px;
  line-height: 45px;
}

.card {
  border: 3px solid #6b7f86;
  border-radius: 34px;
  background: #1c2b32;
}

.card h3 { font-size: 40px; line-height: 54px; }

.session {
  display: flex;
  align-items: center;
  gap: 34px;
  padding: 32px 33px 32px 36px;
}

.info { flex: 1; }

.avatar {
  display: grid;
  place-items: center;
  width: 102px;
  height: 102px;
  border-radius: 50%;
  background: #00513f;
  color: #a3f2d6;
}

.run { width: 51px; height: 51px; fill: currentColor; }
.flame { width: 36px; height: 36px; fill: currentColor; }
.trash { width: 30px; height: 39px; fill: currentColor; }

.time { color: #8d9799; font-size: 36px; line-height: 42px; font-weight: 400; }

.kcal {
  display: flex;
  align-items: center;
  gap: 9px;
  margin-top: 14px;
  color: #ffab40;
  font-size: 36px;
  line-height: 45px;
  font-weight: 400;
}

.delete {
  display: grid;
  place-items: center;
  width: 96px;
  height: 96px;
  color: #bfc9c2;
}

.route {
  margin: 17px 0 28px;
  padding: 42px;
}

.route h3 {
  display: flex;
  align-items: center;
  gap: 22px;
  margin-bottom: 36px;
}

.route .run { color: #88d5bb; }

.scrollbar {
  position: absolute;
  top: 53px;
  right: 0;
  width: 12px;
  height: 342px;
  border: 2px solid #77797b;
  border-right: 0;
  border-radius: 12px 0 0 12px;
  background: #54585a;
}

/* Map */
.map {
  width: 100%;
  height: auto;
  border-radius: 22px;
  font-family: "Noto Sans", sans-serif;
}

.residential { fill: #dfdfdf; }
.plain { fill: #f1eee8; }
.park { fill: #c8facc; }
.light { fill: #dffbe5; }
.grave { fill: #aacbaf; }
.forest { fill: #add19e; }
.wood { fill: #aedfa3; }
.grass { fill: #cdebb0; }
.heath { fill: #c8d7ab; }
.allot { fill: #c9e1bf; }
.farm { fill: #eef0d5; }
.brown { fill: #c7c7b4; }
.lilac { fill: #ebdbe8; }
.pink { fill: #f2dad9; }
.sport { fill: #88e0be; }
.water { fill: #aad3df; }
.hill { fill: #d9db9b; }
.gold { fill: #f0ee92; }
.school { fill: #ffffe5; stroke: #f4f0a0; stroke-width: 4; }

.casing, .paved, .tracks, .rail, .trunk, .yellow-road, .boundary, .dotted, .trees, .track {
  fill: none;
  stroke-linejoin: round;
}

.casing { stroke: #c2c0c0; }
.casing.minor { stroke-width: 15; }
.casing.major { stroke-width: 30; }
.paved { stroke: #fff; }
.paved.minor { stroke-width: 10; }
.paved.major { stroke-width: 23; }

.tracks { stroke: #b08a35; stroke-width: 6; stroke-dasharray: 34 8; }
.yellow-road { stroke: #b5b56a; stroke-width: 37; }
.yellow-road .inner { stroke: #f7fabf; stroke-width: 30; }
.trunk { stroke: #b08a50; stroke-width: 33; }
.trunk .inner { stroke: #fcd6a4; stroke-width: 27; }
.trunk .red { stroke: #f9b29c; stroke-width: 42; }
.rail { stroke: #707070; stroke-width: 26; }
.rail .ties { stroke: #eee; stroke-width: 8; stroke-dasharray: 50 34; }
.rail .siding { stroke-width: 8; stroke: #4d4d4d; }
.boundary { stroke: #ad90a8; stroke-width: 11; stroke-opacity: .75; stroke-dasharray: 44 10 12 10; }
.dotted { stroke: #4d4dfa; stroke-width: 9; stroke-dasharray: 10 16; }
.trees { stroke: #87a877; stroke-width: 5; }
.track { stroke: #88d5bb; stroke-width: 33; stroke-linecap: round; }

.shields { font-size: 86px; fill: #4a4a4a; }
.shields rect { fill: #f1f1f1; stroke: #c6c6c6; stroke-width: 5; }
.shields .federal { fill: #f7e4cf; stroke: #cdae86; }
.shields .federal-text { fill: #7a6233; }

.places {
  fill: #444;
  font-size: 94px;
  stroke: #fff;
  stroke-opacity: .6;
  stroke-width: 10;
  paint-order: stroke;
  stroke-linejoin: round;
}

.places .wood-name { fill: #31934a; font-size: 76px; font-style: italic; font-weight: 500; }
.places .uni { fill: #68752c; font-size: 80px; font-style: italic; }
.places .peak { fill: #80603f; font-size: 80px; }

.big-wood {
  fill: #23953f;
  font-size: 40px;
  font-style: italic;
  font-weight: 500;
  stroke: #fff;
  stroke-opacity: .6;
  stroke-width: 4;
  paint-order: stroke;
}

/* Bottom tabs */
.tabs {
  display: grid;
  grid-template-columns: repeat(4, 1fr);
  padding: 34px 0 35px;
  background: #11191c;
}

.tabs a {
  display: flex;
  flex-direction: column;
  align-items: center;
  gap: 10px;
  color: #bfc7c4;
  font-size: 40px;
  line-height: 56px;
  font-weight: 500;
  text-decoration: none;
}

.pill {
  display: grid;
  place-items: center;
  width: 180px;
  height: 90px;
  border-radius: 45px;
  color: #bfc9c2;
}

.pill svg { width: 68px; height: 68px; fill: currentColor; }
.pill .gear { fill: none; stroke: currentColor; stroke-width: 2; }
.active .pill { background: #00513f; color: #cdeadd; }

.sysnav {
  display: grid;
  grid-template-columns: repeat(3, 1fr);
  place-items: center;
  height: 135px;
  padding: 9px 92px 0 83px;
  background: #010303;
}

.sysnav svg {
  fill: none;
  stroke: #b4b4b4;
  stroke-width: 4;
  stroke-linecap: round;
}
```
